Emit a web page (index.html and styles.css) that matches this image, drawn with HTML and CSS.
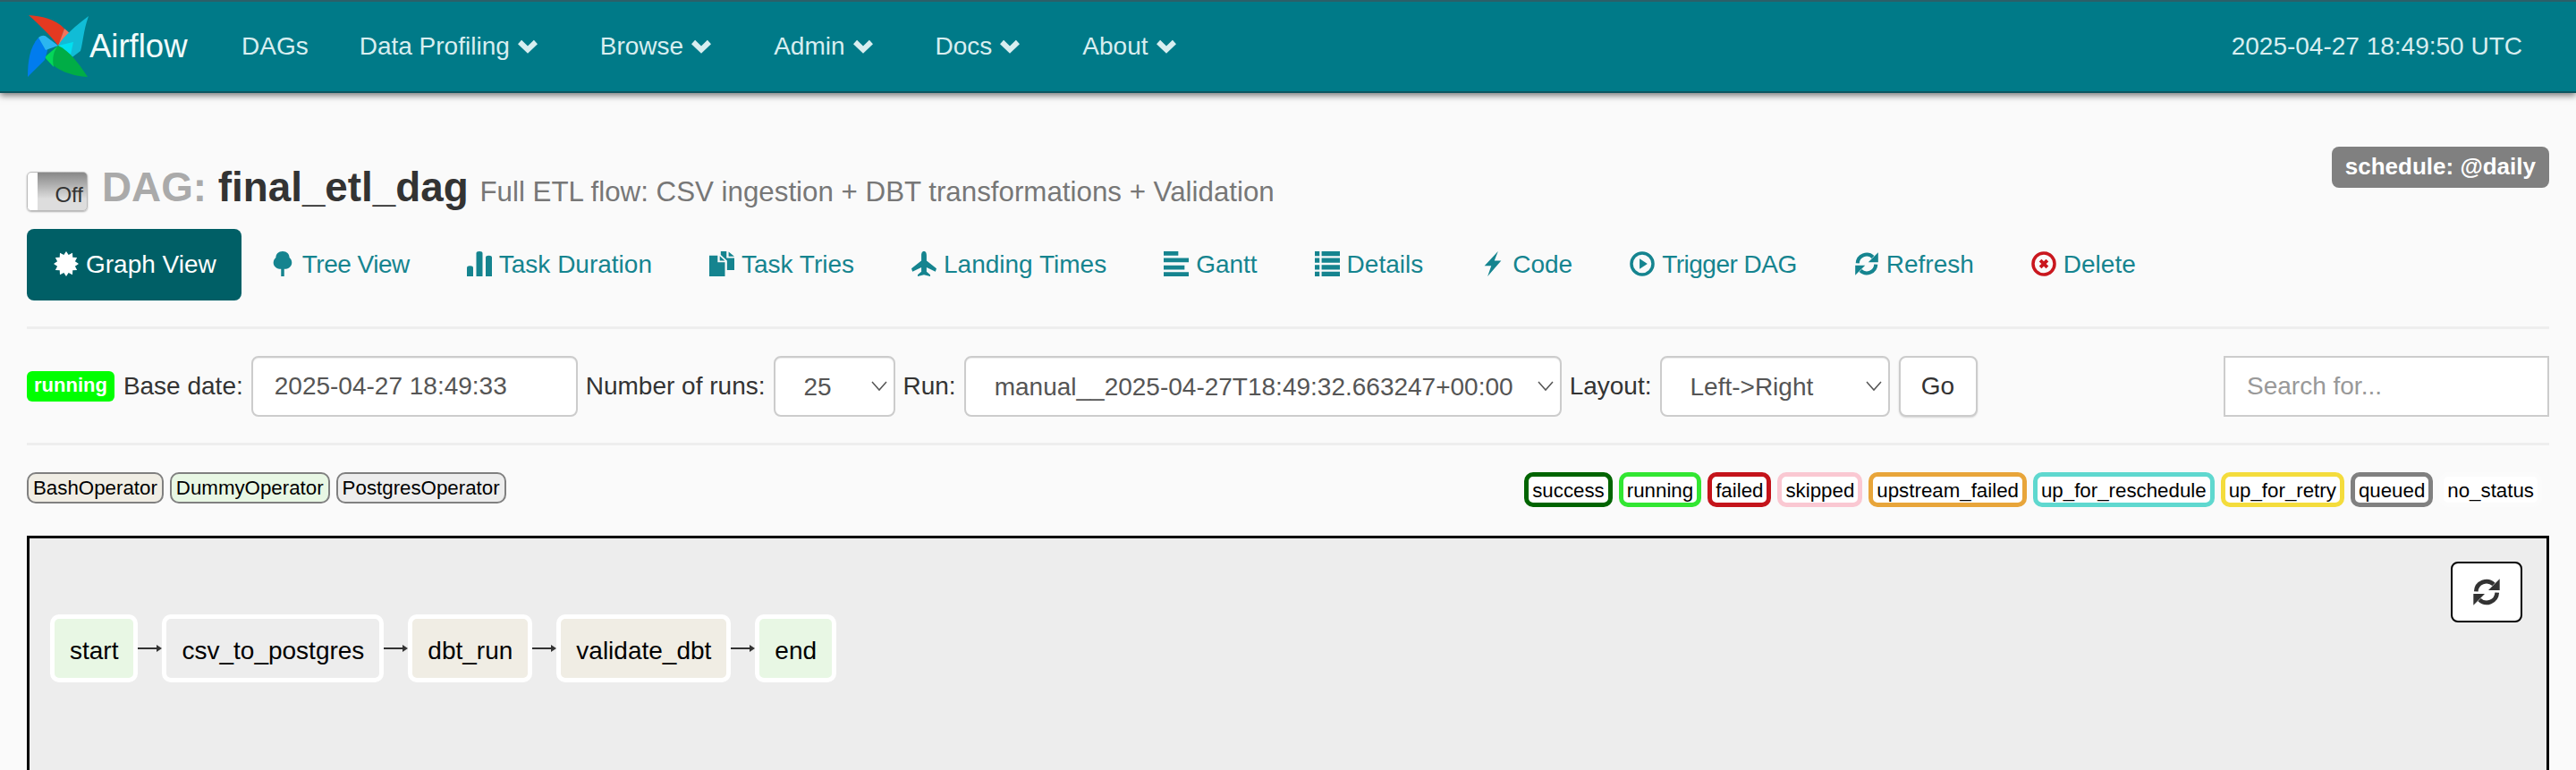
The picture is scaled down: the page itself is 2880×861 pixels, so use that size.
FILE: index.html
```html
<!DOCTYPE html>
<html lang="en">
<head>
<title>Airflow - final_etl_dag</title>
<meta charset="UTF-8">
<link rel="stylesheet" href="styles.css">
</head>
<body>
<svg class="sprite" width="0" height="0">
  <symbol id="chev" viewBox="0 0 24 24"><path d="M0 9 L4.500 4 L12 11.500 L19.500 4 L24 9 L12 20.500 Z"/></symbol>
  <symbol id="refresh" viewBox="0 0 24 24">
    <path fill="none" stroke="currentColor" stroke-width="3.500" d="M3.200 11.500 A8.800 8.800 0 0 1 18 5.500"/>
    <path d="M23 1 V10.500 H13.500Z"/>
    <path fill="none" stroke="currentColor" stroke-width="3.500" d="M20.800 12.500 A8.800 8.800 0 0 1 6 18.500"/>
    <path d="M1 23 V13.500 H10.500Z"/>
  </symbol>
</svg>

<nav class="navbar">
  <a class="brand">
    <svg class="logo" viewBox="0 0 70 70">
      <path fill="#e43921" d="M2 0 C16 1 32 4 42 15 L35 34 C26 22 13 10 2 0Z"/>
      <path fill="#f4725b" d="M42 15 C46 18 49 21 50 24 L35 34Z"/>
      <path fill="#11bcd6" d="M69 1 C63 18 63 30 60 40 L48 49 L42 38 L35 34 C42 22 55 12 69 1Z"/>
      <path fill="#00e0f0" d="M35 34 L52 30 L48 49Z"/>
      <path fill="#00ad46" d="M68 69 C52 68 33 63 20 47 L35 34 C48 40 58 54 68 69Z"/>
      <path fill="#04d659" d="M35 34 L20 47 L30 58 C28 48 30 40 35 34Z"/>
      <path fill="#017cee" d="M1 69 C1 52 3 36 13 25 L24 36 L20 50 C14 56 7 63 1 69Z"/>
      <path fill="#2bb6f0" d="M13 25 C17 22 20 22 23 25 L35 34 L21 39Z"/>
    </svg>
    <span>Airflow</span>
  </a>
  <a class="nav-link nav-first">DAGs</a>
  <a class="nav-link">Data Profiling <svg class="chev"><use href="#chev"/></svg></a>
  <a class="nav-link">Browse <svg class="chev"><use href="#chev"/></svg></a>
  <a class="nav-link">Admin <svg class="chev"><use href="#chev"/></svg></a>
  <a class="nav-link">Docs <svg class="chev"><use href="#chev"/></svg></a>
  <a class="nav-link">About <svg class="chev"><use href="#chev"/></svg></a>
  <span class="clock">2025-04-27 18:49:50 UTC</span>
</nav>

<div class="container">
  <div class="title-row">
    <div class="switch"><span class="knob"></span><span class="off">Off</span></div>
    <h3 class="title"><span class="muted">DAG:</span> final_etl_dag <small>Full ETL flow: CSV ingestion + DBT transformations + Validation</small></h3>
    <span class="schedule">schedule: @daily</span>
  </div>

  <ul class="tabs">
    <li class="tab active">
      <svg class="ico" viewBox="0 0 24 24"><polygon points="12,0 14.28,3.500 18,1.600 18.22,5.780 22.400,6 20.500,9.720 24,12 20.500,14.280 22.400,18 18.220,18.220 18,22.400 14.280,20.500 12,24 9.720,20.500 6,22.400 5.780,18.220 1.600,18 3.500,14.280 0,12 3.500,9.720 1.600,6 5.780,5.780 6,1.600 9.720,3.500"/></svg>
      Graph View</li>
    <li class="tab tab-tight">
      <svg class="ico" viewBox="0 0 24 24"><path d="M12 0 C8 0 5.500 2.500 5.500 6 C2.500 8.500 2.500 13 5 15 C6 16.500 8 17 10.500 17 L10.500 24 L13.500 24 L13.500 17 C16 17 18 16.500 19 15 C21.500 13 21.500 8.500 18.500 6 C18.500 2.500 16 0 12 0Z"/></svg>
      Tree View</li>
    <li class="tab">
      <svg class="ico" viewBox="0 0 24 24"><path d="M0 16 Q0 14 3 14 Q6 14 6 16 V24 H0Z M9 2 Q9 0 12 0 Q15 0 15 2 V24 H9Z M18 6 Q18 4 21 4 Q24 4 24 6 V24 H18Z"/></svg>
      Task Duration</li>
    <li class="tab">
      <svg class="ico" viewBox="0 0 24 24"><path d="M0 4 H8 V10.500 H15 V24 H0Z M10 4.500 L15 9 H10Z M11 0 H16.500 V6.500 H24 V18 H17 V9 L11 3.500Z M18.500 0.500 L24 5 H18.500Z"/></svg>
      Task Tries</li>
    <li class="tab">
      <svg class="ico" viewBox="0 0 24 24"><path d="M12 0 C10 0 9.500 2 9.500 4 V9 L0 16.500 L1 19.500 L9.500 15.500 V19.500 L6 22.500 V24 L12 22.500 L18 24 V22.500 L14.500 19.500 V15.500 L23 19.500 L24 16.500 L14.500 9 V4 C14.500 2 14 0 12 0Z"/></svg>
      Landing Times</li>
    <li class="tab">
      <svg class="ico" viewBox="0 0 24 24"><path d="M0 0 H14 V4 H0Z M0 6.500 H24 V10.500 H0Z M0 13.500 H20 V17.500 H0Z M0 20 H24 V24 H0Z"/></svg>
      Gantt</li>
    <li class="tab">
      <svg class="ico" viewBox="0 0 24 24"><path d="M0 0 H4.500 V4.500 H0Z M6.500 0 H24 V4.500 H6.500Z M0 6.500 H4.500 V11 H0Z M6.500 6.500 H24 V11 H6.500Z M0 13 H4.500 V17.500 H0Z M6.500 13 H24 V17.500 H6.500Z M0 19.500 H4.500 V24 H0Z M6.500 19.500 H24 V24 H6.500Z"/></svg>
      Details</li>
    <li class="tab">
      <svg class="ico" viewBox="0 0 24 24"><path d="M17 0 L4 14 H10.500 L7 24 L20 9 H13.500Z"/></svg>
      Code</li>
    <li class="tab tab-tight">
      <svg class="ico" viewBox="0 0 24 24"><circle cx="12" cy="12" r="10.300" fill="none" stroke="currentColor" stroke-width="3"/><path d="M9.500 7 L17 12 L9.500 17Z"/></svg>
      Trigger DAG</li>
    <li class="tab">
      <svg class="ico"><use href="#refresh"/></svg>
      Refresh</li>
    <li class="tab">
      <svg class="ico ico-red" viewBox="0 0 24 24"><circle cx="12" cy="12" r="10.300" fill="none" stroke="currentColor" stroke-width="3"/><path d="M7.500 9.800 L9.800 7.500 L12 9.700 L14.200 7.500 L16.500 9.800 L14.300 12 L16.500 14.200 L14.200 16.500 L12 14.300 L9.800 16.500 L7.500 14.200 L9.700 12Z"/></svg>
      Delete</li>
  </ul>

  <hr class="rule">

  <form class="filters">
    <span class="state-badge">running</span>
    <label>Base date:</label>
    <input class="ctl date-in" type="text" value="2025-04-27 18:49:33">
    <label>Number of runs:</label>
    <select class="ctl runs-in"><option>25</option></select>
    <label>Run:</label>
    <select class="ctl run-in"><option>manual__2025-04-27T18:49:32.663247+00:00</option></select>
    <label>Layout:</label>
    <select class="ctl layout-in"><option>Left-&gt;Right</option></select>
    <button class="go" type="button">Go</button>
    <input class="search" type="text" placeholder="Search for...">
  </form>

  <hr class="rule">

  <div class="legend-row">
    <div class="ops">
      <span class="op op-bash">BashOperator</span>
      <span class="op op-dummy">DummyOperator</span>
      <span class="op op-pg">PostgresOperator</span>
    </div>
    <div class="states">
      <span class="st st-success">success</span>
      <span class="st st-running">running</span>
      <span class="st st-failed">failed</span>
      <span class="st st-skipped">skipped</span>
      <span class="st st-upstream">upstream_failed</span>
      <span class="st st-resched">up_for_reschedule</span>
      <span class="st st-retry">up_for_retry</span>
      <span class="st st-queued">queued</span>
      <span class="st st-none">no_status</span>
    </div>
  </div>

  <div class="graph">
    <button class="graph-refresh" type="button">
      <svg><use href="#refresh"/></svg>
    </button>
    <div class="flow">
      <div class="node op-dummy">start</div>
      <svg class="edge" viewBox="0 0 27 12"><path d="M0 5 H23 V7 H0Z M21 2 L27 6 L21 10Z"/></svg>
      <div class="node op-pg">csv_to_postgres</div>
      <svg class="edge" viewBox="0 0 27 12"><path d="M0 5 H23 V7 H0Z M21 2 L27 6 L21 10Z"/></svg>
      <div class="node op-bash">dbt_run</div>
      <svg class="edge" viewBox="0 0 27 12"><path d="M0 5 H23 V7 H0Z M21 2 L27 6 L21 10Z"/></svg>
      <div class="node op-bash">validate_dbt</div>
      <svg class="edge" viewBox="0 0 27 12"><path d="M0 5 H23 V7 H0Z M21 2 L27 6 L21 10Z"/></svg>
      <div class="node op-dummy">end</div>
    </div>
  </div>
</div>
</body>
</html>
```

FILE: styles.css
```css
html, body {
    margin: 0;
    height: 100%;
    overflow: hidden;
}
body {
    font-family: "Liberation Sans", Arial, sans-serif;
    font-size: 28px;
    color: #333333;
    background-color: #fafafa;
}
.sprite {
    position: absolute;
}

/* top bar */
.navbar {
    display: flex;
    align-items: center;
    box-sizing: border-box;
    height: 104px;
    padding: 0 60px 0 30px;
    border-top: 2px solid #2c5f68;
    border-bottom: 2px solid #0d5560;
    background-color: #007a88;
    box-shadow: 0 3px 7px rgba(0, 0, 0, 0.5);
    color: #d8eef0;
}
.brand {
    display: flex;
    align-items: center;
    width: 205px;
    color: #f2fbfb;
    font-size: 36.500px;
}
.logo {
    width: 70px;
    height: 70px;
    flex: none;
}
.nav-link {
    display: flex;
    align-items: center;
    gap: 9px;
    margin-right: 70px;
    white-space: nowrap;
}
.nav-first {
    margin-left: 35px;
    margin-right: 57px;
}
.chev {
    width: 22px;
    height: 22px;
    fill: #d8eef0;
}
.clock {
    margin-left: auto;
}

/* page body */
.container {
    display: flex;
    flex-direction: column;
    height: calc(100vh - 104px);
    box-sizing: border-box;
    padding: 60px 30px 0;
}
.title-row {
    position: relative;
    display: flex;
    align-items: flex-start;
    height: 72px;
    flex: none;
}
.switch {
    display: flex;
    box-sizing: border-box;
    width: 68px;
    height: 44px;
    margin-top: 28px;
    border: 1px solid #bbbbbb;
    border-radius: 5px;
    overflow: hidden;
    box-shadow: 0 1px 2px rgba(0, 0, 0, 0.3);
    background: linear-gradient(#888888, #dddddd 70%);
}
.knob {
    width: 11px;
    background-color: #ffffff;
}
.off {
    flex: 1;
    padding: 11px 4px 0 0;
    text-align: right;
    font-size: 24px;
    line-height: 28px;
    color: #333333;
}
.title {
    margin: 20px 0 0 16px;
    font-size: 45.800px;
    font-weight: bold;
    white-space: nowrap;
}
.muted {
    color: #aaaaaa;
}
.title small {
    font-size: 31.300px;
    font-weight: normal;
    color: #777777;
}
.schedule {
    position: absolute;
    top: 0;
    right: 0;
    padding: 7px 15px 8px;
    border-radius: 8px;
    background-color: #808080;
    color: #ffffff;
    font-size: 26px;
    font-weight: bold;
}

/* view tabs */
.tabs {
    display: flex;
    flex: none;
    margin: 20px 0 0;
    padding: 0;
    list-style: none;
}
.tab {
    display: flex;
    align-items: center;
    gap: 8px;
    height: 80px;
    padding: 0 32px;
    color: #15848f;
    white-space: nowrap;
}
.tab-tight {
    letter-spacing: -0.500px;
}
.tab.active {
    padding: 0 28px 0 30px;
    border-radius: 8px;
    background-color: #005f66;
    color: #ffffff;
}
.ico {
    width: 28px;
    height: 28px;
    flex: none;
    margin-top: -3px;
    fill: currentColor;
}
.ico-red {
    color: #c9171e;
}
.rule {
    flex: none;
    width: 100%;
    height: 3px;
    margin: 29px 0 0;
    border: none;
    background-color: #eeeeee;
}

/* date / run form */
.filters {
    display: flex;
    flex: none;
    align-items: center;
    height: 68px;
    margin: 30px 0 0;
    gap: 9px;
}
.state-badge {
    padding: 3px 8px 5px;
    margin-right: 1px;
    border-radius: 6px;
    background-color: #00ff00;
    color: #ffffff;
    font-size: 22px;
    font-weight: bold;
}
.ctl, .go, .search {
    box-sizing: border-box;
    height: 68px;
    border: 2px solid #cccccc;
    border-radius: 8px;
    background-color: #ffffff;
    color: #555555;
    font-family: inherit;
    font-size: 28px;
}
.ctl {
    padding: 0 24px;
    appearance: none;
    box-shadow: inset 0 1px 1px rgba(0, 0, 0, 0.075);
}
select.ctl {
    background-image: url("data:image/svg+xml,%3Csvg xmlns='http://www.w3.org/2000/svg' width='18' height='12'%3E%3Cpath d='M1 1 L9 10 L17 1' fill='none' stroke='%23555' stroke-width='1.500'/%3E%3C/svg%3E");
    background-repeat: no-repeat;
    background-position: right 7px center;
}
.date-in {
    width: 365px;
}
.runs-in {
    width: 136px;
    padding-left: 32px;
}
.run-in {
    width: 668px;
    padding-left: 32px;
    padding-right: 32px;
}
.layout-in {
    width: 257px;
    padding-left: 32px;
}
.go {
    width: 88px;
    margin-left: 1px;
    color: #333333;
    box-shadow: 0 1px 2px rgba(0, 0, 0, 0.15);
}
.search {
    width: 364px;
    margin-left: auto;
    padding: 0 24px;
    border-radius: 0;
}
.search::placeholder {
    color: #999999;
}

/* operators and states */
.legend-row {
    display: flex;
    flex: none;
    justify-content: space-between;
    margin-top: 30px;
    font-size: 22.300px;
    color: #000000;
}
.ops, .states {
    display: flex;
    gap: 7px;
    align-items: flex-start;
}
.op {
    box-sizing: border-box;
    height: 35px;
    padding: 3px 5px 0;
    border: 2px solid #808080;
    border-radius: 10px;
}
.op-bash {
    background-color: #f0ede4;
}
.op-dummy {
    background-color: #e8f7e4;
}
.op-pg {
    background-color: #ededed;
}
.states {
    margin-right: 8px;
}
.st {
    box-sizing: border-box;
    height: 39px;
    padding: 3px 4px 0;
    border: 5px solid #000000;
    border-radius: 10px;
    background-color: #ffffff;
}
.st-success { border-color: #006400; }
.st-running { border-color: #32e632; }
.st-failed { border-color: #c4141b; }
.st-skipped { border-color: #fac8d2; }
.st-upstream { border-color: #e8a53a; }
.st-resched { border-color: #5fd8cf; }
.st-retry { border-color: #f4dc3c; }
.st-queued { border-color: #808080; }
.st-none { border-color: #fbfbfb; }

/* graph */
.graph {
    position: relative;
    flex: 1;
    box-sizing: border-box;
    margin-top: 32px;
    border: 3px solid #000000;
    border-bottom: none;
    background-color: #ededed;
}
.graph-refresh {
    position: absolute;
    top: 26px;
    right: 27px;
    width: 80px;
    height: 68px;
    padding: 0;
    border: 2px solid #000000;
    border-radius: 8px;
    background-color: #ffffff;
    color: #333333;
}
.graph-refresh svg {
    width: 32px;
    height: 32px;
    margin-top: 2px;
    fill: currentColor;
}
.flow {
    display: flex;
    align-items: center;
    margin: 85px 0 0 23px;
}
.node {
    display: flex;
    align-items: center;
    box-sizing: border-box;
    height: 76px;
    padding: 5px 17px 0;
    border: 5px solid #ffffff;
    border-radius: 10px;
    color: #000000;
    font-size: 28px;
}
.edge {
    width: 27px;
    height: 12px;
    flex: none;
    fill: #333333;
}
```
